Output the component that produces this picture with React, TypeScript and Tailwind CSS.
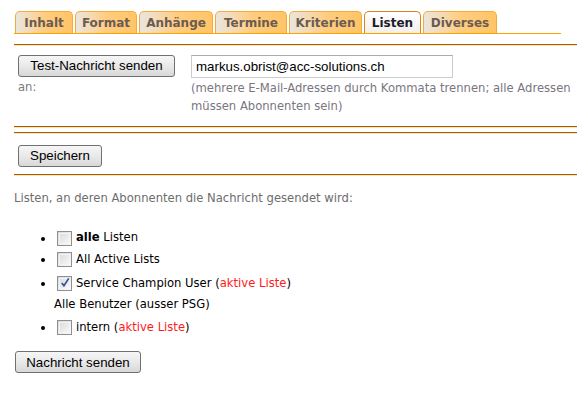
import React from "react";

const tabs = [
  { label: "Inhalt", w: "w-[58px]" },
  { label: "Format", w: "w-[62px]" },
  { label: "Anhänge", w: "w-[74px]" },
  { label: "Termine", w: "w-[72px]" },
  { label: "Kriterien", w: "w-[73px]" },
  { label: "Listen", w: "w-[57px]", active: true },
  { label: "Diverses", w: "w-[74px]" },
];

function Rule() {
  return (
    <div className="w-full">
      <div className="h-px bg-[#a45f00]" />
      <div className="h-px bg-[#fde2b8]" />
    </div>
  );
}

function Btn({ children, className = "" }: { children: React.ReactNode; className?: string }) {
  return (
    <button
      className={
        "h-[22px] rounded-[3px] border border-[#707070] bg-gradient-to-b from-[#f6f6f6] via-[#e9e9e9] to-[#d8d8d8] text-[13.3px] leading-none text-black font-['Liberation_Sans',Arial,sans-serif] " +
        className
      }
    >
      {children}
    </button>
  );
}

function Check({ checked = false }: { checked?: boolean }) {
  return (
    <span className="relative ml-[2px] inline-block h-[15px] w-[15px] shrink-0 border border-[#8e8f8f] bg-gradient-to-br from-[#d8d8d8] to-[#fbfbfb]">
      <span className="absolute inset-[1px] border border-[#f4f4f4]" />
      {checked && (
        <svg viewBox="0 0 14 14" className="absolute left-[1px] top-0 h-[13px] w-[13px]">
          <path d="M3 6.5 L5.3 9.5 L10.5 1.5" fill="none" stroke="#3753a4" strokeWidth="1.9" />
        </svg>
      )}
    </span>
  );
}

export default function App() {
  return (
    <div className="h-[396px] w-[577px] overflow-hidden bg-white font-['DejaVu_Sans',Verdana,sans-serif] text-[11.6px]">
      <div className="pl-[14px] pt-[11px]">
        {/* Tabs */}
        <div className="flex w-[547px] items-end gap-[2px] border-b border-[#ffa200] pl-px">
          {tabs.map((t) => (
            <div
              key={t.label}
              className={
                t.w +
                " flex h-[22px] items-center justify-center rounded-t-[5px] border border-b-0 text-[12px] font-bold " +
                (t.active
                  ? "border-[#d9861e] bg-gradient-to-b from-[#ffffff] to-[#f3f0ea] text-[#1c1c2c]"
                  : "border-[#f7a93a] bg-gradient-to-r from-[#e9e6df] via-[#ffcd80] to-[#ffc466] text-[#6b5b53]")
              }
            >
              {t.label}
            </div>
          ))}
        </div>

        <div className="mt-[10px]">
          <Rule />
        </div>

        {/* Test section */}
        <div className="mt-[9px] flex">
          <div className="w-[177px] pl-[4px]">
            <Btn className="w-[157px]">Test-Nachricht senden</Btn>
            <div className="mt-[2px] text-[#7b7b7b]">an:</div>
          </div>
          <div>
            <div className="flex h-[23px] w-[262px] items-center border border-[#c9ccd1] border-t-[#a9abae] px-[4px] text-[13.3px] text-black font-['Liberation_Sans',Arial,sans-serif]">
              markus.obrist@acc-solutions.ch
            </div>
            <div className="mt-[1px] leading-[18px] text-[#7a7580]">
              (mehrere E-Mail-Adressen durch Kommata trennen; alle Adressen
              <br />
              müssen Abonnenten sein)
            </div>
          </div>
        </div>

        <div className="mt-[11px]">
          <Rule />
        </div>
        <div className="mt-[4px]">
          <Rule />
        </div>

        <div className="mt-[11px] pl-[4px]">
          <Btn className="w-[84px]">Speichern</Btn>
        </div>

        <div className="mt-[7px]">
          <Rule />
        </div>

        <div className="mt-[14px] text-[#6d6d6d]">
          Listen, an deren Abonnenten die Nachricht gesendet wird:
        </div>

        <ul className="mt-[22px] list-disc pl-[41px] text-black marker:text-black">
          <li className="mb-[4px]">
            <span className="inline-flex items-center gap-[4px] align-middle">
              <Check />
              <span>
                <b>alle</b> Listen
              </span>
            </span>
          </li>
          <li className="mb-[6px]">
            <span className="inline-flex items-center gap-[4px] align-middle">
              <Check />
              <span>All Active Lists</span>
            </span>
          </li>
          <li>
            <span className="inline-flex items-center gap-[4px] align-middle">
              <Check checked />
              <span>
                Service Champion User (<span className="text-[#ff1a1a]">aktive Liste</span>)
              </span>
            </span>
            <div className="mt-[4px] mb-[5px] -ml-[1px]">Alle Benutzer (ausser PSG)</div>
          </li>
          <li>
            <span className="inline-flex items-center gap-[4px] align-middle">
              <Check />
              <span>
                intern (<span className="text-[#ff1a1a]">aktive Liste</span>)
              </span>
            </span>
          </li>
        </ul>

        <div className="mt-[15px] pl-[1px]">
          <Btn className="w-[126px]">Nachricht senden</Btn>
        </div>
      </div>
    </div>
  );
}
